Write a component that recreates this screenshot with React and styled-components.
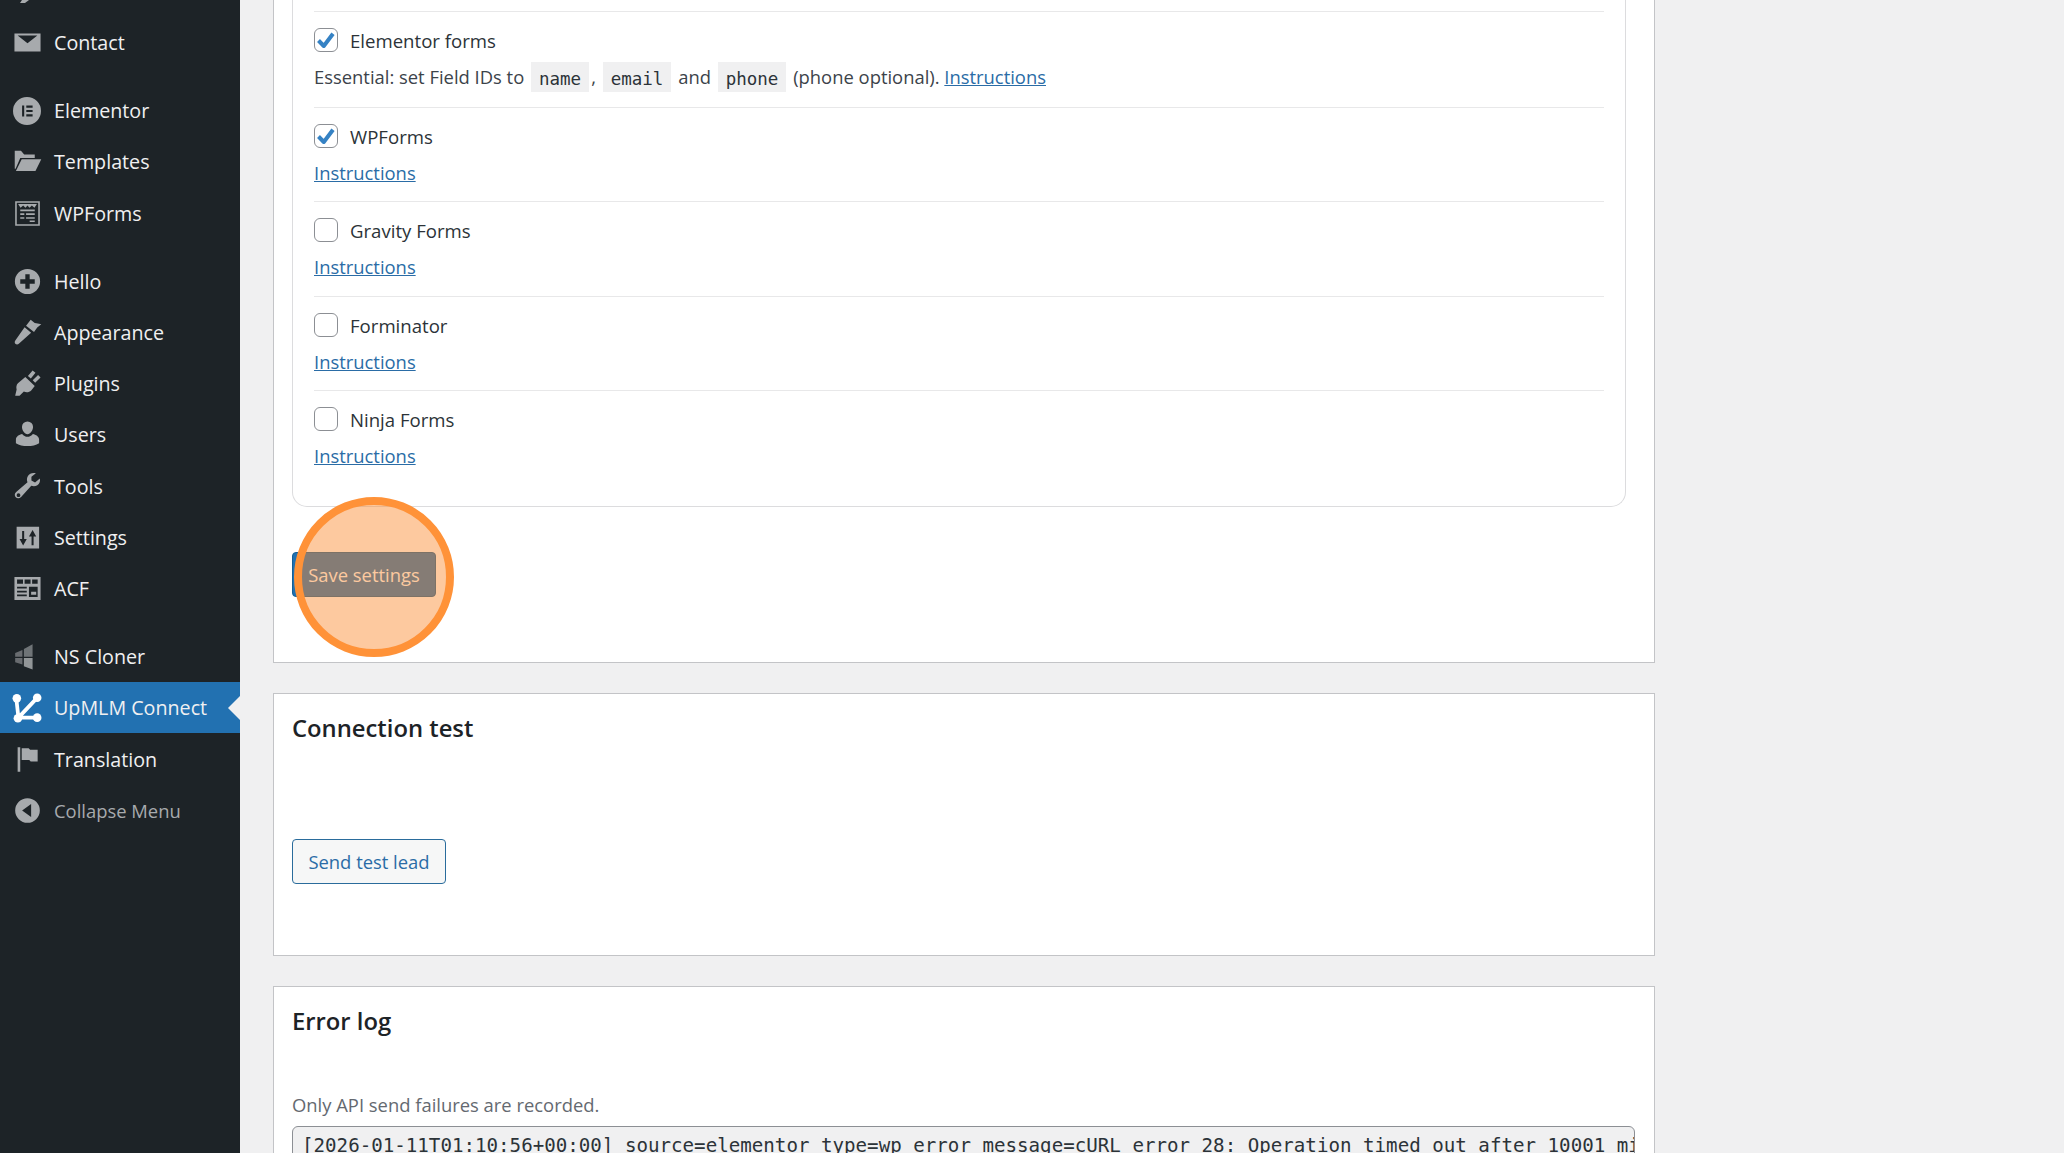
import React from "react";
import styled, { createGlobalStyle } from "styled-components";

const Global = createGlobalStyle`
  html, body { margin: 0; padding: 0; height: 100%; overflow: hidden; background: #f0f0f1; }
  #root { height: 100%; }
  * { box-sizing: border-box; }
`;
const SANS = `"Open Sans", "Noto Sans", sans-serif`;
const MONO = `"DejaVu Sans Mono", "Liberation Mono", monospace`;

const Page = styled.div`
  display: flex; width: 2064px; height: 1153px; overflow: hidden; background: #f0f0f1; position: relative;
  font-family: ${SANS};
`;
const Sidebar = styled.nav`
  width: 240px; flex: none; height: 100%; background: #1d2327; padding-top: 17px;
  display: flex; flex-direction: column; position: relative;
`;
const ScrolledTip = styled.span`
  position: absolute; left: 20px; top: 0; width: 9px; height: 3px; color: #a7aaad;
  svg { display: block; }
`;
const MenuItem = styled.div`
  height: 51.2px; flex: none; display: flex; align-items: center; position: relative;
  margin-bottom: ${p => (p.$gap ? "17px" : "0")};
  background: ${p => (p.$active ? "#2271b1" : "transparent")};
  color: ${p => (p.$dim ? "#a7aaad" : "#f0f0f1")};
  font-size: ${p => (p.$dim ? "18.4px" : "19.7px")}; padding-left: 54px;
  ${p => p.$active && `&::after { content: ""; position: absolute; right: 0; top: 50%; margin-top: -12px; border: 12px solid transparent; border-right-color: #f0f0f1; border-left-width: 0; }`}
`;
const IconSlot = styled.span`
  position: absolute; left: 12px; top: 50%; margin-top: -15px; width: 30px; height: 30px;
  display: flex; align-items: center; justify-content: center;
  color: ${p => (p.$active ? "#fff" : "#a7aaad")};
  svg { display: block; }
`;
const Main = styled.main`
  flex: 1; min-width: 0; padding-left: 33px; display: flex; flex-direction: column;
`;
const Panel = styled.section`
  width: 1382px; flex: none; background: #fff; border: 1px solid #c3c4c7;
  padding: 0 18px; height: ${p => p.$h}px; margin-top: ${p => p.$mt || 0}px;
  ${p => p.$open && "border-top: none;"}
  ${p => p.$openBottom && "border-bottom: none;"}
  display: flex; flex-direction: column;
  overflow: hidden;
`;
const IntegrationCard = styled.div`
  width: 1334px; height: 507px; flex: none; border: 1px solid #dcdcde; border-top: none;
  border-radius: 0 0 15px 15px; padding: 11px 21px 0;
  display: flex; flex-direction: column;
`;
const Row = styled.div`
  height: ${p => p.$h}px; flex: none; border-top: 1px solid #e8e8e9; padding-top: 15px;
`;
const CheckLabel = styled.label`
  display: flex; align-items: center; gap: 12px; height: 26px;
  font-size: 18.6px; font-weight: 500; color: #2c3338; line-height: 27px;
`;
const LabelText = styled.span`
  padding-top: 1px;
`;
const Box = styled.span`
  width: 24px; height: 24px; flex: none; border: 1.5px solid #8c8f94; border-radius: 6px; background: #fff;
  display: flex; align-items: center; justify-content: center;
`;
const Desc = styled.div`
  margin-top: 8px; height: 30px; display: flex; align-items: center;
  font-size: 18.4px; color: #3c434a; white-space: pre;
`;
const Code = styled.code`
  font-family: ${MONO}; font-size: 17.5px; background: #f0f0f1; color: #2c3338;
  padding: 0 8px; height: 30px; line-height: 34px; display: inline-block; margin: 2px 2px 0;
`;
const InstrLink = styled.a`
  color: #2a6ca6; text-decoration: underline; font-size: 18.4px;
`;
const PrimaryBtn = styled.button`
  margin-top: 45px; width: 144px; height: 45px; flex: none; background: #2271b1; border: 1px solid #135e96;
  border-radius: 4px; color: #fff; font-family: ${SANS}; font-size: 18.4px; padding: 0;
`;
const SecondaryBtn = styled.button`
  margin-top: 95px; width: 154px; height: 45px; flex: none; background: #f6f7f7; border: 1px solid #2a6c9c;
  border-radius: 4px; color: #2a6ca6; font-family: ${SANS}; font-size: 18.4px; padding: 0;
`;
const Title = styled.h2`
  margin: 18px 0 0; font-size: 23.8px; font-weight: 600; color: #1d2327; line-height: 32px;
`;
const Note = styled.p`
  margin: 55px 0 0; font-size: 18.4px; color: #646970; line-height: 26px;
`;
const Log = styled.div`
  margin-top: 8px; width: 1343px; height: 60px; background: #f0f0f1; border: 1px solid #8c8f94; border-radius: 6px;
  font-family: ${MONO}; font-size: 19.17px; color: #2c3338; padding: 7px 0 0 9px; white-space: pre; overflow: hidden;
`;
const Highlight = styled.div`
  position: absolute; left: 294px; top: 497px; width: 160px; height: 160px; border-radius: 50%;
  border: 8px solid #ff9238; background: rgba(250,137,45,.457);
`;

const S = ({ children, vb = "0 0 20 20", size = 29 }) => (
  <svg width={size} height={size} viewBox={vb} fill="currentColor">{children}</svg>
);
const icons = {
  mail: <S><path d="M1 3.800h18v12.400H1z M3.200 5.200 10 10.500l6.800-5.300z" fillRule="evenodd" /></S>,
  elementor: <S size={28}><path fillRule="evenodd" d="M10 0a10 10 0 1 0 0 20 10 10 0 0 0 0-20zM6.500 6H8v8H6.500zM9.500 6H14v1.600H9.500zM9.500 9.200H14v1.600H9.500zM9.500 12.400H14V14H9.500z" /></S>,
  folder: <S><path d="M1.200 15V2.500h4.300l2.200 2.600H15V7.500H5L1.800 15z M2 16.500 6 8.500h13.500L15.500 16.500z" /></S>,
  wpforms: <S><path fillRule="evenodd" d="M1.500 1.500h17v17h-17zM2.600 2.600v14.800h14.800V2.600zM3.500 3.400h13L14.800 6 13 4.500 11.400 6 10 4.500 8.600 6 7 4.500 5.200 6zM5 7.300h10v1.100H5zM5 9.900h2.800v1.100H5zM9 9.900h6v1.100H9zM5 12.500h2.800v1.100H5zM9 12.500h6v1.100H9zM11.500 14.800h3.500v1.100h-3.500z" /></S>,
  plus: <S><path fillRule="evenodd" d="M10 1.300a8.700 8.700 0 1 0 0 17.400 8.700 8.700 0 0 0 0-17.400zM8.500 5h3v3.500H15v3h-3.500V15h-3v-3.500H5v-3h3.500z" /></S>,
  brush: <S><path d="M19.500 4.300c-1.800-.3-3.300-.5-4.500-.8L12.200 1.200 9 5.300l5.500 4.300 2.200-3zM8 6.300l-6.300 9c-.7 1-.7 2 .1 2.600.8.600 1.700.3 2.400-.4l8.300-7.400z" /></S>,
  plug: <S><path d="M13.500 1l2 1.500-3.200 4-2-1.600zM17.300 4.200l1.700 1.700-3.700 3.500-1.700-1.700zM8.500 5.500l6.500 6.200-2.300 3c-1.700 1.700-3.800 1.600-5.200.9l-3 2.800H1.500l1-4.300c-.4-1.500-.2-3.200.9-4.300z" /></S>,
  user: <S><path d="M10 1a3.800 3.800 0 0 1 3.800 3.900c0 2.300-1.800 4.900-3.800 4.900S6.200 7.200 6.200 4.900A3.800 3.800 0 0 1 10 1zM6.300 9.600c1 1.200 2.300 2 3.700 2s2.700-.8 3.700-2c2 .5 4.300 1.600 4.300 4V16c-2 1.500-5 2-8 2s-6-.5-8-2v-2.400c0-2.400 2.300-3.500 4.300-4z" /></S>,
  wrench: <S><path fillRule="evenodd" d="M18.500 4.500l-3.300 2.700-2.500-1.300V3.200L15.800.9c-2.300-.6-4.400.1-5.500 1.900-.8 1.300-.9 3-.3 4.200L2.200 13.800c-1.300 1.200-1.200 2.700-.3 3.600s2.400 1.100 3.700-.2l7-7.700c1.500.5 2.900.4 4.200-.4 1.500-1 2.200-2.800 1.700-4.600zM3.800 14.700a1.300 1.300 0 1 1 0 2.600 1.300 1.300 0 0 1 0-2.600z" /></S>,
  settings: <S><path fillRule="evenodd" d="M2.500 2.500h15.500v15H2.500zM6.300 5.500v5.500H4.500L7 15.500l2.500-4.500H7.700V5.500zM13.500 4.800 11 9.300h1.800v6h1.400v-6H16z" /></S>,
  acf: <S><path fillRule="evenodd" d="M1 2h18v16H1zM2.800 3.800v3h4.100v-3zM8 3.800v3h4.100v-3zM13.200 3.800v3H17v-3zM2.800 8.800v1.200h6.700V8.800zM2.800 11.500v1.200h6.700v-1.200zM2.800 14.200v1.200h6.700v-1.200zM11 8.800v7h6v-7zM12.500 12.300H16v2h-3.500z" /></S>,
  cloner: <S><path opacity=".55" d="M1.500 7.500l5-2v4.700h-5zM1.500 11h5v4.500l-5-1.500z" /><path opacity=".6" d="M7.500 4.800l6-3.300v8.700h-6z" /><path opacity=".85" d="M7.500 11h6v8l-6-2.200z" /></S>,
  upmlm: (
    <svg width={30} height={30} viewBox="0 0 28 28" fill="none" stroke="currentColor" strokeWidth="3.500">
      <path d="M4 5 6 23h17M6 23 23 5" />
      <g fill="currentColor" stroke="none"><circle cx="4.500" cy="5" r="4" /><circle cx="23.500" cy="4.500" r="4" /><circle cx="5.500" cy="23.500" r="4" /><circle cx="23.500" cy="23" r="4" /></g>
    </svg>
  ),
  flag: <S><path d="M3.200 1.500h1.800v17H3.200zM6 2.300h4.800l1 1H17v8h-4.800l-1-1H6z" /></S>,
  collapse: <S><path fillRule="evenodd" d="M10 1.500a8.500 8.500 0 1 0 0 17 8.500 8.500 0 0 0 0-17zM12.500 5.500v9L6.300 10z" /></S>,
};

const menu = [
  { t: "Contact", i: "mail", gap: 1 },
  { t: "Elementor", i: "elementor" },
  { t: "Templates", i: "folder" },
  { t: "WPForms", i: "wpforms", gap: 1 },
  { t: "Hello", i: "plus" },
  { t: "Appearance", i: "brush" },
  { t: "Plugins", i: "plug" },
  { t: "Users", i: "user" },
  { t: "Tools", i: "wrench" },
  { t: "Settings", i: "settings" },
  { t: "ACF", i: "acf", gap: 1 },
  { t: "NS Cloner", i: "cloner" },
  { t: "UpMLM Connect", i: "upmlm", active: 1 },
  { t: "Translation", i: "flag" },
  { t: "Collapse Menu", i: "collapse", dim: 1 },
];

const Check = ({ on }) => (
  <Box>
    {on && (
      <svg width="22" height="22" viewBox="0 0 22 22" fill="none">
        <path d="M3.500 11.500 8.800 17 18 4.800" stroke="#3582c4" strokeWidth="4" strokeLinejoin="round" />
      </svg>
    )}
  </Box>
);

const IntegrationRow = ({ h, on, label, children }) => (
  <Row $h={h}>
    <CheckLabel><Check on={on} /><LabelText>{label}</LabelText></CheckLabel>
    <Desc>{children}</Desc>
  </Row>
);

export default function App() {
  return (
    <Page>
      <Global />
      <Sidebar>
        <ScrolledTip>
          <svg width="9" height="3" viewBox="0 0 9 3" fill="currentColor"><path d="M0 3 2 0h7L5 3z" /></svg>
        </ScrolledTip>
        {menu.map(m => (
          <MenuItem key={m.t} $active={m.active} $dim={m.dim} $gap={m.gap}>
            <IconSlot $active={m.active}>{icons[m.i]}</IconSlot>
            {m.t}
          </MenuItem>
        ))}
      </Sidebar>
      <Main>
        <Panel $h={663} $open>
          <IntegrationCard>
            <IntegrationRow h={96} on label="Elementor forms">
              Essential: set Field IDs to <Code>name</Code>, <Code>email</Code> and <Code>phone</Code> (phone optional). <InstrLink>Instructions</InstrLink>
            </IntegrationRow>
            <IntegrationRow h={94} on label="WPForms"><InstrLink>Instructions</InstrLink></IntegrationRow>
            <IntegrationRow h={95} label="Gravity Forms"><InstrLink>Instructions</InstrLink></IntegrationRow>
            <IntegrationRow h={94} label="Forminator"><InstrLink>Instructions</InstrLink></IntegrationRow>
            <IntegrationRow h={115} label="Ninja Forms"><InstrLink>Instructions</InstrLink></IntegrationRow>
          </IntegrationCard>
          <PrimaryBtn>Save settings</PrimaryBtn>
        </Panel>
        <Panel $h={263} $mt={30}>
          <Title>Connection test</Title>
          <SecondaryBtn>Send test lead</SecondaryBtn>
        </Panel>
        <Panel $h={200} $mt={30} $openBottom>
          <Title>Error log</Title>
          <Note>Only API send failures are recorded.</Note>
          <Log>[2026-01-11T01:10:56+00:00] source=elementor type=wp_error message=cURL error 28: Operation timed out after 10001 milliseconds</Log>
        </Panel>
      </Main>
      <Highlight />
    </Page>
  );
}
